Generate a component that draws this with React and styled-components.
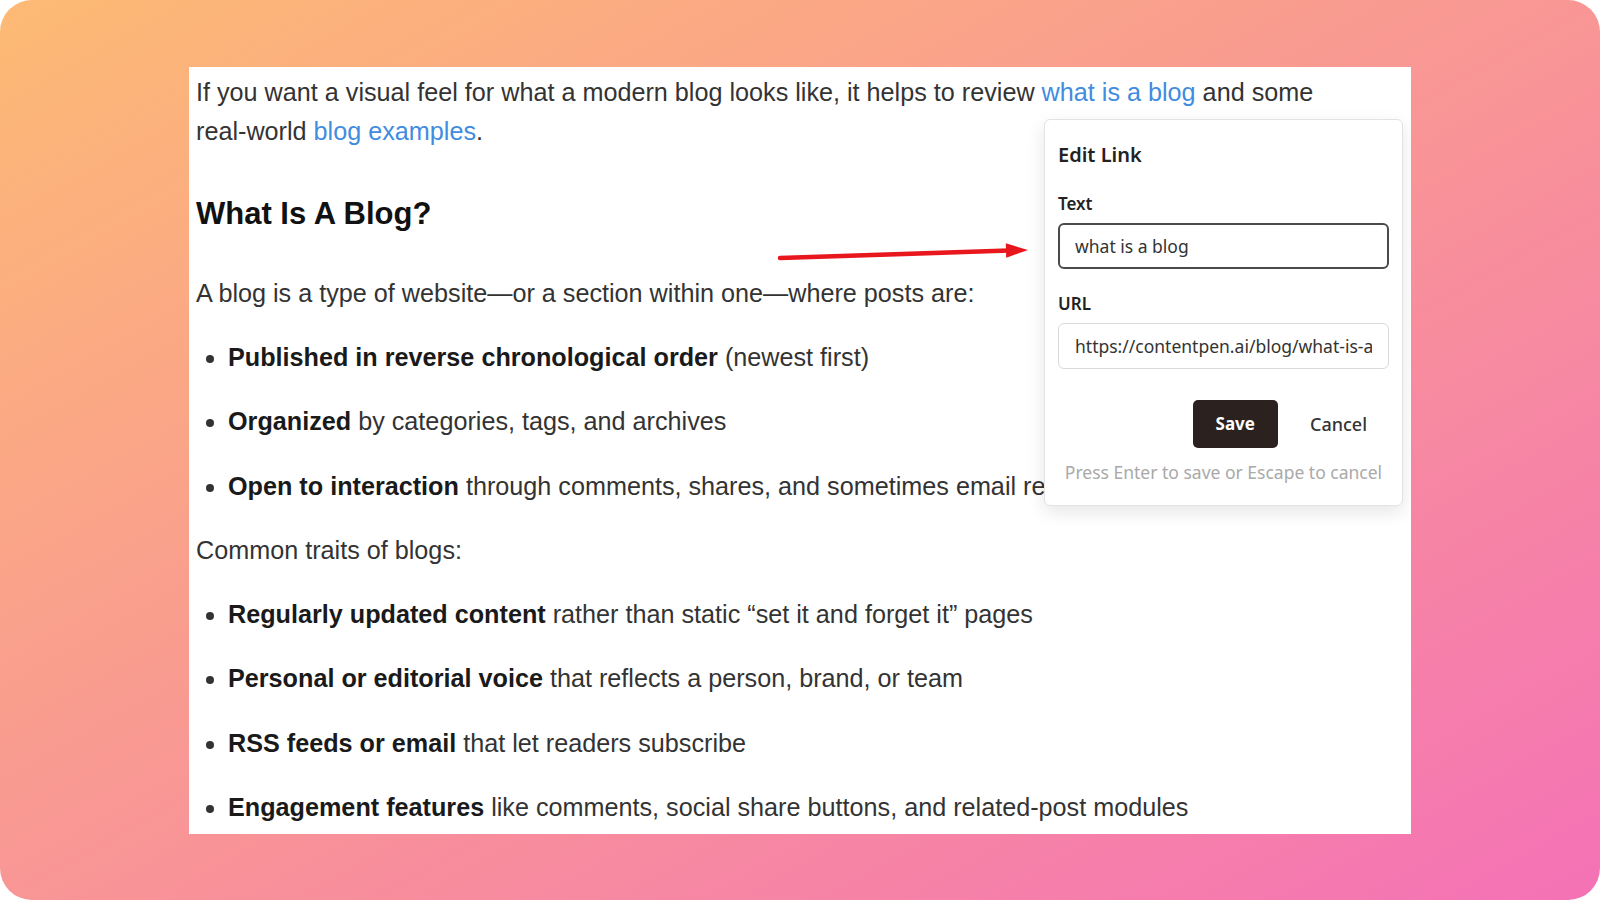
import React from 'react';
import styled, { createGlobalStyle } from 'styled-components';

const GlobalStyle = createGlobalStyle`
  html, body {
    margin: 0;
    padding: 0;
    background: #ffffff;
  }
  * {
    box-sizing: border-box;
  }
`;

const Frame = styled.div`
  width: 1600px;
  height: 900px;
  border-radius: 32px;
  background: linear-gradient(to bottom right, #fdba74, #f472b6);
  display: flex;
  align-items: center;
  justify-content: center;
  font-family: 'Liberation Sans', Arial, sans-serif;
`;

const Sheet = styled.article`
  position: relative;
  width: 1222px;
  height: 767px;
  padding: 6px 7px 0;
  background: #ffffff;
  overflow: hidden;
  color: #333333;
  font-size: 25.2px;
  line-height: 1.55;
`;

const Para = styled.p`
  margin: 1em 0;
  &:first-child {
    margin-top: 0;
  }
`;

const Heading = styled.h2`
  margin: 44px 0 42px;
  font-size: 31px;
  line-height: 1.2;
  font-weight: 700;
  color: #111111;
`;

const Bullets = styled.ul`
  margin: 1em 0;
  padding-left: 32px;
  list-style: disc;
`;

const Item = styled.li`
  margin: 1em 0;
  white-space: nowrap;
`;

const Strong = styled.strong`
  font-weight: 700;
  color: #1a1a1a;
`;

const Link = styled.a`
  color: #3f8ce0;
  text-decoration: none;
`;

const NoBreak = styled.span`
  white-space: nowrap;
`;

const Pointer = styled.svg`
  position: absolute;
  left: 586px;
  top: 169px;
  overflow: visible;
`;

const Popover = styled.div`
  position: absolute;
  top: 52px;
  left: 855px;
  width: 359px;
  padding: 21px 13px 21px;
  display: flex;
  flex-direction: column;
  background: #ffffff;
  border: 1px solid #e3e3e3;
  border-radius: 6px;
  box-shadow: 0 6px 18px rgba(0, 0, 0, 0.1);
  font-family: 'Noto Sans', 'Open Sans', sans-serif;
  color: #222222;
`;

const Title = styled.div`
  margin: 0 0 23px;
  font-size: 20px;
  line-height: 28px;
  font-weight: 600;
`;

const Field = styled.label`
  display: flex;
  flex-direction: column;
  gap: 7px;
  & + & {
    margin-top: 23px;
  }
`;

const Label = styled.span`
  font-size: 17px;
  line-height: 24px;
  font-weight: 600;
`;

const Input = styled.input`
  width: 100%;
  height: 46px;
  padding: 0 ${(p) => (p.$focused ? 15 : 16)}px;
  border: ${(p) => (p.$focused ? '2px solid #4a4a4a' : '1px solid #d9d9d9')};
  border-radius: 6px;
  outline: none;
  background: #ffffff;
  font-family: 'Noto Sans', 'Open Sans', sans-serif;
  font-size: 17.5px;
  color: #333333;
`;

const Actions = styled.div`
  margin-top: 31px;
  display: flex;
  justify-content: flex-end;
  gap: 10px;
`;

const Button = styled.button`
  height: 48px;
  padding: 0 ${(p) => (p.$primary ? 23 : 22)}px;
  border: none;
  border-radius: 5px;
  background: ${(p) => (p.$primary ? '#2b2220' : 'transparent')};
  color: ${(p) => (p.$primary ? '#ffffff' : '#333333')};
  font-family: 'Noto Sans', 'Open Sans', sans-serif;
  font-size: ${(p) => (p.$primary ? 17 : 18)}px;
  font-weight: ${(p) => (p.$primary ? 700 : 500)};
  cursor: pointer;
`;

const Hint = styled.div`
  margin-top: 12px;
  text-align: center;
  font-size: 17.5px;
  line-height: 24px;
  color: #a9a9a9;
`;

const traits = [
  ['Published in reverse chronological order', ' (newest first)'],
  ['Organized', ' by categories, tags, and archives'],
  ['Open to interaction', ' through comments, shares, and sometimes email replies'],
];

const common = [
  ['Regularly updated content', ' rather than static \u201cset it and forget it\u201d pages'],
  ['Personal or editorial voice', ' that reflects a person, brand, or team'],
  ['RSS feeds or email', ' that let readers subscribe'],
  ['Engagement features', ' like comments, social share buttons, and related-post modules'],
];

function List({ items }) {
  return (
    <Bullets>
      {items.map(([bold, rest]) => (
        <Item key={bold}>
          <Strong>{bold}</Strong>
          {rest}
        </Item>
      ))}
    </Bullets>
  );
}

function EditLink() {
  return (
    <Popover>
      <Title>Edit Link</Title>
      <Field>
        <Label>Text</Label>
        <Input $focused readOnly value="what is a blog" />
      </Field>
      <Field>
        <Label>URL</Label>
        <Input readOnly value="https://contentpen.ai/blog/what-is-a-blog" />
      </Field>
      <Actions>
        <Button $primary>Save</Button>
        <Button>Cancel</Button>
      </Actions>
      <Hint>Press Enter to save or Escape to cancel</Hint>
    </Popover>
  );
}

export default function App() {
  return (
    <>
      <GlobalStyle />
      <Frame>
        <Sheet>
          <Para>
            If you want a visual feel for what a modern blog looks like, it helps to review{' '}
            <Link href="#">what is a blog</Link> and some <NoBreak>real-world</NoBreak>{' '}
            <Link href="#">blog examples</Link>.
          </Para>
          <Heading>What Is A Blog?</Heading>
          <Para>A blog is a type of website—or a section within one—where posts are:</Para>
          <List items={traits} />
          <Para>Common traits of blogs:</Para>
          <List items={common} />

          <Pointer width="260" height="35" viewBox="0 0 260 35">
            <line x1="5" y1="22" x2="234" y2="14.6" stroke="#e8161d" strokeWidth="4.5" strokeLinecap="round" />
            <polygon points="253,14 231.2,21.7 230.8,7.3" fill="#e8161d" />
          </Pointer>
          <EditLink />
        </Sheet>
      </Frame>
    </>
  );
}
